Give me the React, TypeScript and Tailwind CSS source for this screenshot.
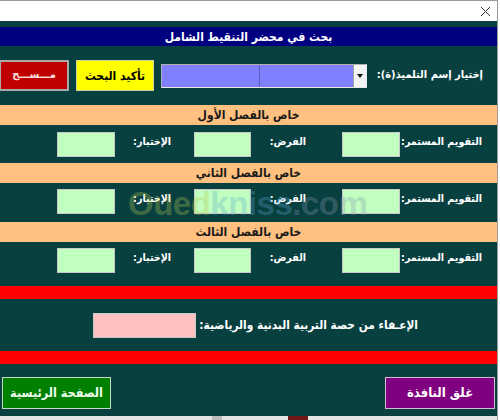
import React from "react";

const F = "font-['DejaVu_Sans_Condensed','DejaVu_Sans',sans-serif]";

function Band({ text }: { text: string }) {
  return (
    <div className={`h-[20px] bg-[#ffc080] flex items-center justify-center text-[12px] font-bold text-[#1a1a1a] ${F}`} dir="rtl">
      {text}
    </div>
  );
}

function Box({ w }: { w: string }) {
  return <div className={`${w} h-[25px] bg-[#c0ffc0] border border-[#c8c8c8] shrink-0`} />;
}

function ScoreRow() {
  const lab = `pt-[2px] text-white font-bold text-[10.6px] leading-[14px] whitespace-nowrap ${F}`;
  return (
    <div dir="rtl" className="flex h-[25px] pr-[15px] items-start">
      <div className={`w-[82px] shrink-0 ${lab}`}>التقويم المستمر:</div>
      <Box w="w-[58px]" />
      <div className="w-[36px] shrink-0" />
      <div className={`w-[55px] shrink-0 ${lab}`}>الفرض:</div>
      <Box w="w-[57px]" />
      <div className="w-[23px] shrink-0" />
      <div className={`w-[56px] shrink-0 ${lab}`}>الإختبار:</div>
      <Box w="w-[58px]" />
    </div>
  );
}

export default function App() {
  return (
    <div className="w-[500px] h-[420px] relative overflow-hidden bg-white flex">
      <div className="w-[497px] flex flex-col">
        {/* title bar */}
        <div className="h-[21px] bg-white border-t border-[#9a9a9a] flex items-center justify-end pr-[6px]">
          <svg width="11" height="11" viewBox="0 0 11 11">
            <path d="M1 1 L10 10 M10 1 L1 10" stroke="#333" strokeWidth="1" />
          </svg>
        </div>
        {/* body */}
        <div className="flex-1 bg-[#084040] flex flex-col">
          <div className="h-[6px]" />
          <div className={`h-[19px] bg-[#000080] flex items-center justify-center text-white font-bold text-[12px] ${F}`} dir="rtl">
            بحث في محضر التنقيط الشامل
          </div>
          <div className="h-[14px]" />
          {/* search row */}
          <div dir="rtl" className="flex items-center h-[31px] pr-[14px]">
            <div className={`w-[111px] shrink-0 text-white font-bold text-[11px] whitespace-nowrap ${F}`}>
              إختيار إسم التلميذ(ة):
            </div>
            <div className="w-[5px] shrink-0" />
            <div className="w-[206px] h-[24px] shrink-0 bg-[#8080ff] border border-t-[#b0b0b0] border-l-[#b0b0b0] border-r-[#e8e8e8] border-b-[#e8e8e8] flex" dir="ltr">
              <div className="w-[98px] h-full border-r border-[#5c5cc0]" />
              <div className="flex-1" />
              <div className="w-[13px] h-full bg-[#f4f4f4] border-l border-[#a0a0a0] flex items-center justify-center">
                <svg width="6" height="4" viewBox="0 0 6 4">
                  <path d="M0 0 L6 0 L3 4 Z" fill="#111" />
                </svg>
              </div>
            </div>
            <div className="w-[7px] shrink-0" />
            <div className={`w-[78px] h-[31px] shrink-0 bg-[#ffff00] border border-[#d0d0a0] flex items-center justify-center text-black font-bold text-[12px] ${F}`}>
              تأكيد البحث
            </div>
            <div className="w-[7px] shrink-0" />
            <div className={`w-[70px] h-[31px] shrink-0 bg-[#c00000] border-2 border-[#a8a8a8] flex items-center justify-center text-[#ffe0e0] font-bold text-[11px] ${F}`}>
              مـــســـح
            </div>
          </div>
          <div className="h-[14px]" />
          <Band text="خاص بالفصل الأول" />
          <div className="h-[7px]" />
          <ScoreRow />
          <div className="h-[6px]" />
          <Band text="خاص بالفصل الثاني" />
          <div className="h-[6px]" />
          <ScoreRow />
          <div className="h-[8px]" />
          <Band text="خاص بالفصل الثالث" />
          <div className="h-[6px]" />
          <ScoreRow />
          <div className="h-[13px]" />
          <div className="h-[13px] bg-[#ff0000]" />
          <div className="h-[14px]" />
          <div dir="rtl" className="flex items-center h-[25px] pr-[79px]">
            <div className={`w-[222px] shrink-0 text-white font-bold text-[11.8px] whitespace-nowrap ${F}`}>
              الإعـفاء من حصة التربية البدنية والرياضية:
            </div>
            <div className="w-[103px] h-[25px] shrink-0 bg-[#ffc0c0] border border-[#c8c8c8]" />
          </div>
          <div className="h-[13px]" />
          <div className="h-[13px] bg-[#ff0000]" />
          <div className="h-[13px]" />
          <div className="flex justify-between h-[32px] pl-[2px] pr-[2px]">
            <div className={`w-[109px] h-[32px] bg-[#008000] border border-[#c8d8c8] flex items-center justify-center text-[#f0fff0] font-bold text-[12.5px] ${F}`} dir="rtl">
              الصفحة الرئيسية
            </div>
            <div className={`w-[110px] h-[32px] bg-[#800080] border border-[#d0c0d0] flex items-center justify-center text-white font-bold text-[13px] ${F}`} dir="rtl">
              غلق النافذة
            </div>
          </div>
          <div className="flex-1" />
          <div className="h-[4px] bg-[#e4e4e4] flex">
            <div className="w-[212px]" />
            <div className="w-[10px] bg-[#bdbdbd]" />
            <div className="w-[66px]" />
            <div className="w-[20px] bg-[#701818]" />
          </div>
        </div>
      </div>
      <div className="w-[1px] bg-[#9a9a9a]" />
      <div className="flex-1 bg-white" />
      {/* watermark */}
      <div className="absolute left-[128px] top-[186px] pointer-events-none font-['Liberation_Sans',sans-serif] font-bold text-[33px] leading-[36px] tracking-[-0.5px] opacity-30 whitespace-nowrap">
        <span className="text-[#b8c850]">Oued</span>
        <span className="text-[#58a8d0]">kniss</span>
        <span className="text-[#8898b0]">.com</span>
      </div>
    </div>
  );
}
